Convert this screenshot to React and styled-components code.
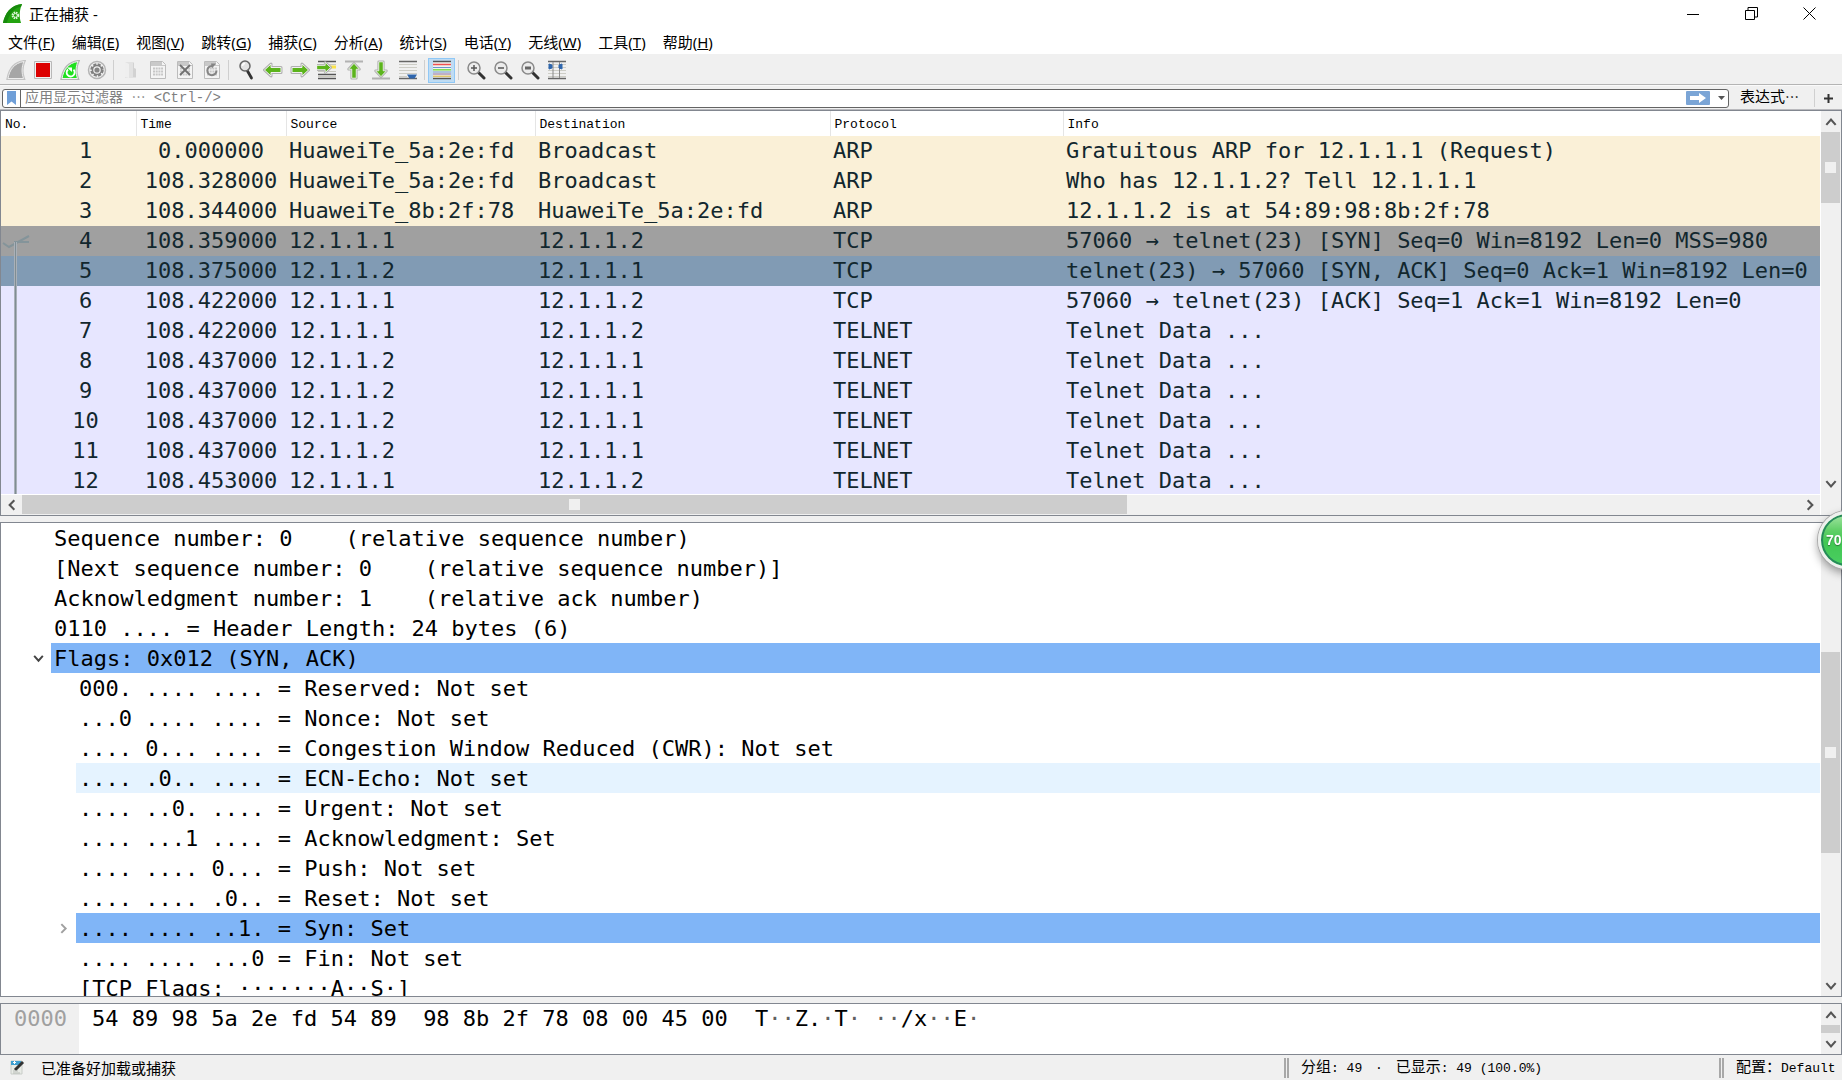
import React from 'react';
import styled, { createGlobalStyle } from 'styled-components';

const GlobalStyle = createGlobalStyle`
  * {
    box-sizing: border-box;
  }

  body {
    margin: 0;
    overflow: hidden;
    background: #f0f0f0;
    color: #000;
  }

  button {
    margin: 0;
    padding: 0;
    border: none;
    background: none;
    color: inherit;
    font: inherit;
  }
`;

const UI_FONT = `'Noto Sans', 'Noto Sans CJK SC', sans-serif`;
const SMALL_FONT = `'Liberation Mono', 'Noto Sans CJK SC', monospace`;
const DATA_FONT = `'DejaVu Sans Mono', 'Noto Sans CJK SC', monospace`;

const Window = styled.div`
  display: flex;
  flex-direction: column;
  height: 100vh;
  overflow: hidden;
  font-family: ${UI_FONT};
  font-size: 15px;
`;

/* ---- title bar and menu ---- */

const TitleBar = styled.header`
  display: flex;
  align-items: center;
  gap: 7px;
  height: 29px;
  padding: 0 4px 2px 3px;
  background: #fff;
`;

const Title = styled.h1`
  flex: 1;
  margin: 0;
  font-size: 15px;
  font-weight: 400;
  line-height: 26px;
`;

const WindowButtons = styled.div`
  display: flex;
`;

const WindowButton = styled.button`
  display: flex;
  align-items: center;
  justify-content: center;
  width: 58px;
  height: 26px;
`;

const MenuBar = styled.nav`
  display: flex;
  height: 27px;
  background: #fff;
  border-bottom: 2px solid #f0f0f0;
`;

const MenuItem = styled.button`
  padding: 0 9px 0 8px;
  font-size: 15px;
  line-height: 24px;
  white-space: nowrap;
`;

/* ---- toolbar ---- */

const ToolBar = styled.div`
  display: flex;
  align-items: center;
  height: 29px;
  padding: 0 2px;
  border-bottom: 1px solid #b4b4b4;
`;

const ToolButton = styled.button`
  display: flex;
  align-items: center;
  justify-content: center;
  width: 27px;
  height: 25px;
  border: 1px solid ${({ $active }) => ($active ? '#90c8f6' : 'transparent')};
  background: ${({ $active }) => ($active ? '#bfdcf3' : 'transparent')};

  svg {
    flex: none;
  }
`;

const ToolSeparator = styled.span`
  width: 7px;
  height: 20px;
  background: linear-gradient(#cfcfcf, #cfcfcf) center / 1px 100% no-repeat;
`;

/* ---- display filter ---- */

const FilterBar = styled.form`
  display: flex;
  align-items: center;
  height: 25px;
  padding: 1px 0 0 2px;
  border-top: 1px solid #fafafa;
  border-bottom: 1px solid #b9b9bd;
`;

const FilterBox = styled.div`
  display: flex;
  flex: 1;
  align-items: center;
  height: 19px;
  border: 1px solid #646464;
  border-radius: 3px;
  background: #fff;
`;

const BookmarkButton = styled.button`
  display: flex;
  align-items: center;
  justify-content: center;
  width: 18px;
  height: 17px;
  border-right: 1px solid #646464;
`;

const FilterInput = styled.input`
  flex: 1;
  min-width: 0;
  height: 17px;
  padding: 0 4px;
  border: none;
  outline: none;
  background: transparent;
  font-family: ${SMALL_FONT};
  font-size: 14px;

  &::placeholder {
    color: #808080;
    opacity: 1;
  }
`;

const ApplyButton = styled.button`
  display: flex;
  align-items: center;
  justify-content: center;
  width: 24px;
  height: 14px;
  border-radius: 1px;
  background: #7ba5d6;
`;

const CaretButton = styled.button`
  display: flex;
  align-items: center;
  justify-content: center;
  width: 18px;
  height: 17px;
  padding-left: 4px;
`;

const ExpressionButton = styled.button`
  width: 86px;
  height: 18px;
  padding-left: 11px;
  border-right: 1px solid #d0d0d0;
  font-family: ${SMALL_FONT};
  font-size: 14px;
  line-height: 18px;
  text-align: left;
  white-space: nowrap;
`;

const AddButton = styled.button`
  display: flex;
  align-items: center;
  justify-content: center;
  width: 27px;
  height: 18px;
`;

/* ---- panes ---- */

const Panes = styled.main`
  display: flex;
  flex: 1;
  flex-direction: column;
  gap: 6px;
  min-height: 0;
`;

const Pane = styled.section`
  display: flex;
  flex: ${({ $share }) => $share} 1 0;
  min-height: 0;
  border: 1px solid #828790;
  background: #fff;
`;

const PaneBody = styled.div`
  position: relative;
  display: flex;
  flex: 1;
  flex-direction: column;
  min-width: 0;
  overflow: hidden;
`;

const Viewport = styled.div`
  flex: 1;
  min-height: 0;
  overflow: hidden;
`;

const PacketTable = styled.table`
  width: 100%;
  table-layout: fixed;
  border-collapse: collapse;
`;

const HeadCell = styled.th`
  height: 25px;
  padding: 2px 4px 0;
  border-right: 1px solid #e5e5e5;
  font-family: ${SMALL_FONT};
  font-size: 13px;
  font-weight: 400;
  line-height: 23px;
  text-align: left;

  &:last-child {
    border-right: none;
  }
`;

const rowColors = {
  arp: '#faf0d7',
  syn: '#a0a0a0',
  selected: '#819bb4',
  tcp: '#e7e6ff',
};

const PacketRow = styled.tr`
  height: 30px;
  background: ${({ $kind }) => rowColors[$kind]};
  color: #12272e;
`;

const Cell = styled.td`
  padding: 0 0 0 3px;
  overflow: hidden;
  font-family: ${DATA_FONT};
  font-size: 22px;
  line-height: 30px;
  white-space: pre;
`;

const NumberCell = styled(Cell)`
  padding-left: 34px;
  text-align: center;
`;

const TimeCell = styled(Cell)`
  padding: 0;
  text-align: center;
`;

const RelatedMark = styled.svg`
  position: absolute;
  top: 115px;
  left: 0;
`;

/* ---- scroll bars ---- */

const VerticalBar = styled.div`
  display: flex;
  flex: none;
  flex-direction: column;
  width: 21px;
  padding-right: 1px;
  border-left: 1px solid #fff;
  background: #f0f0f0;
`;

const HorizontalBar = styled.div`
  display: flex;
  flex: none;
  height: 21px;
  padding-bottom: 1px;
  border-top: 1px solid #fff;
  background: #f0f0f0;
`;

const ScrollButton = styled.button`
  display: flex;
  flex: none;
  align-items: center;
  justify-content: center;
  width: ${({ $wide }) => ($wide ? 21 : 19)}px;
  height: ${({ $wide }) => ($wide ? 19 : 21)}px;
`;

const Track = styled.div`
  display: flex;
  flex: 1;
  flex-direction: ${({ $across }) => ($across ? 'row' : 'column')};
  min-height: 0;
`;

const Space = styled.span`
  flex: ${({ $share }) => $share} 1 0;
`;

const Thumb = styled.div`
  display: flex;
  flex: ${({ $share }) => $share} 1 0;
  align-items: center;
  justify-content: center;
  background: #cdcdcd;
`;

const Grip = styled.span`
  width: 11px;
  height: 11px;
  background: #f0f0f0;
`;

const Corner = styled.span`
  height: 21px;
`;

/* ---- packet details ---- */

const Tree = styled.ul`
  margin: 0;
  padding: 0;
  list-style: none;
`;

const TreeRow = styled.li`
  display: flex;
  height: 30px;
  padding-left: ${({ $level }) => 25 + $level * 25}px;
`;

const Branch = styled.button`
  display: flex;
  align-items: center;
  justify-content: center;
  width: 25px;
  height: 30px;
`;

const treeColors = {
  selected: '#80b5f7',
  hover: '#e5f3ff',
};

const TreeText = styled.span`
  flex: 1;
  overflow: hidden;
  padding-left: 3px;
  background: ${({ $state }) => treeColors[$state] || 'transparent'};
  font-family: ${DATA_FONT};
  font-size: 22px;
  line-height: 32px;
  white-space: pre;
`;

/* ---- bytes ---- */

const HexLine = styled.div`
  display: flex;
  height: 100%;
  font-family: ${DATA_FONT};
  font-size: 22px;
  line-height: 30px;
  white-space: pre;
`;

const HexOffset = styled.span`
  width: 78px;
  padding-left: 13px;
  background: #f0f0f0;
  color: #a0a0a0;
`;

const HexBytes = styled.span`
  width: 676px;
  padding-left: 13px;
`;

const HexText = styled.span``;

const Dim = styled.span`
  color: #606060;
`;

/* ---- status bar ---- */

const StatusBar = styled.footer`
  display: flex;
  align-items: center;
  height: 25px;
  font-family: ${SMALL_FONT};
  font-size: 13px;
`;

const EditComment = styled.button`
  display: flex;
  width: 41px;
  padding-left: 10px;
`;

const StatusText = styled.span`
  flex: 1;
  font-size: 15px;
`;

const StatusField = styled.span`
  width: ${({ $width }) => $width}px;
  height: 20px;
  padding-left: 12px;
  border-left: 5px double #a8a8a8;
  line-height: 22px;
  white-space: pre;
`;

const Han = styled.span`
  font-size: 15px;
`;

const Dot = styled.span`
  padding: 0 5px;
`;

/* ---- floating ball ---- */

const Ball = styled.button`
  position: fixed;
  top: 511px;
  right: -34px;
  width: 58px;
  height: 58px;
  padding-left: 5px;
  border: 3px solid #eef0ee;
  border-radius: 50%;
  background: linear-gradient(#a4e4a4 0%, #5fcf66 32%, #41c753 55%, #4bcf62 100%);
  box-shadow: inset 0 0 0 2px #27895a, 0 0 0 1px #a9a9a9, 0 4px 10px rgba(0, 0, 0, 0.4);
  color: #fff;
  font-family: 'Liberation Sans', sans-serif;
  font-size: 14px;
  font-weight: 700;
  text-align: left;
  text-shadow: 0 1px 1px #277a35;
`;

/* ---- icons ---- */

const Icon = ({ children, size = 20 }) => (
  <svg width={size} height={size} viewBox="0 0 20 20" fill="none" aria-hidden="true">
    {children}
  </svg>
);

const FIN = 'M2 18.500C3.500 10 8 3 18 1.500C15.500 7 15.500 13 17.500 18.500Z';

const AppIcon = () => (
  <Icon size={19}>
    <path d="M0 20C2 10 8 1 20 0C17 7 17 14 19 20Z" fill="#23a310" />
    <path d="M0 20C2 10 8 1 20 0L19 3C10 4 6 13 4 20Z" fill="#178a0c" />
    <circle cx="13" cy="12" r="3" stroke="#dff5da" strokeWidth="2" strokeDasharray="1.600 .8" />
    <circle cx="13" cy="12" r="2" stroke="#dff5da" />
  </Icon>
);

const Fin = () => (
  <Icon>
    <path d={FIN} fill="#a6a6a6" stroke="#c4c4c4" strokeWidth="3" />
    <path d={FIN} fill="#a6a6a6" stroke="#ececec" />
  </Icon>
);

const Stop = () => (
  <Icon>
    <path d="M1.500 1.500h17v17h-17z" fill="#f0f0f0" stroke="#b8b8b8" />
    <path d="M3 3h14v14H3z" fill="#dc0000" />
  </Icon>
);

const Restart = () => (
  <Icon>
    <path d={FIN} fill="#1fe01f" stroke="#b5b5b5" strokeWidth="3" />
    <path d={FIN} fill="#1fe01f" stroke="#f2f2f2" />
    <path d="M8 9.500a4 4 0 1 0 5.500.2" stroke="#fff" strokeWidth="1.800" />
    <path d="M7 7.500h5v4.500z" fill="#fff" />
  </Icon>
);

const Options = () => (
  <Icon>
    <circle cx="10" cy="10" r="8.500" fill="#f2f2f2" stroke="#b4b4b4" strokeWidth="1.500" />
    <circle cx="10" cy="10" r="5.500" stroke="#808080" strokeWidth="2.500" strokeDasharray="3 1.320" />
    <circle cx="10" cy="10" r="4.500" stroke="#808080" strokeWidth="1.500" />
    <circle cx="10" cy="10" r="2.600" fill="#858585" />
  </Icon>
);

const Open = () => (
  <Icon>
    <path d="M4 2h9v6l2 1v9H4z" fill="#e2e2e2" />
    <path d="M4 2l4 2v14l-4-1z" fill="#efefef" />
    <path d="M12 3v14h3V9l-2-1V3z" fill="#d2d2d2" />
  </Icon>
);

const Sheet = ({ children }) => (
  <Icon>
    <path d="M2.500 1.500h12l3 3v14h-15z" fill="#f4f4f4" stroke="#bcbcbc" />
    <path d="M3 2h11v3h3v1H3z" fill="#c9c9c9" />
    <path d="M5 8.500h10M5 11.500h10M5 14.500h10" stroke="#c6c6c6" strokeWidth="2" strokeDasharray="2 .7" />
    {children}
  </Icon>
);

const Save = () => <Sheet />;

const CloseFile = () => (
  <Sheet>
    <path d="M5 5l10 10M15 5L5 15" stroke="#707070" strokeWidth="1.800" />
  </Sheet>
);

const Reload = () => (
  <Sheet>
    <path d="M14.500 10.500A4.600 4.600 0 1 1 10 6" stroke="#858585" strokeWidth="2" />
    <path d="M9 3.500h5L10 8.500z" fill="#858585" />
  </Sheet>
);

const Lens = ({ children }) => (
  <Icon>
    <path d="M12.500 12.500l5.500 5.500" stroke="#333" strokeWidth="3" strokeLinecap="round" />
    <circle cx="8" cy="8" r="6" fill="#ececec" stroke="#8a8a8a" strokeWidth="1.500" />
    {children}
  </Icon>
);

const Find = () => (
  <Icon>
    <path d="M11.500 11l4 7" stroke="#333" strokeWidth="2.800" strokeLinecap="round" />
    <circle cx="9" cy="6" r="5" fill="#e4e4e4" stroke="#666" strokeWidth="1.500" />
    <path d="M6.500 6A2.500 2.500 0 0 1 9 3.500" stroke="#fff" strokeWidth="1.500" />
  </Icon>
);

const ARROW = 'M1.500 10L8 4v3.500h10v5H8V16z';

const GreenArrow = ({ transform }) => (
  <g transform={transform}>
    <path d={ARROW} stroke="#b0b0b0" strokeWidth="3" strokeLinejoin="round" />
    <path d={ARROW} fill="#5cb41c" stroke="#f0f0f0" strokeWidth="1" />
  </g>
);

const Back = () => (
  <Icon>
    <GreenArrow />
  </Icon>
);

const Forward = () => (
  <Icon>
    <GreenArrow transform="rotate(180 10 10)" />
  </Icon>
);

const Jump = () => (
  <Icon>
    <path d="M1 1.500h18M1 14.500h18M1 18.500h18" stroke="#555" strokeWidth="1.500" />
    <path d="M1 4.500h18M1 11.500h18M1 16.500h18" stroke="#c9c9c0" />
    <path d="M12 7h7" stroke="#fbe34a" strokeWidth="3" />
    <GreenArrow transform="translate(-1 -2) rotate(180 8 9) scale(.85)" />
  </Icon>
);

const First = () => (
  <Icon>
    <path d="M1 1.500h18" stroke="#b2b2b2" strokeWidth="2" />
    <GreenArrow transform="translate(1 2) rotate(90 9 9) scale(.9)" />
  </Icon>
);

const Last = () => (
  <Icon>
    <path d="M1 18.500h18" stroke="#b2b2b2" strokeWidth="2" />
    <GreenArrow transform="translate(1 0) rotate(-90 9 9) scale(.9)" />
  </Icon>
);

const AutoScroll = () => (
  <Icon>
    <path d="M1 1.500h18M1 18.500h18" stroke="#666" strokeWidth="1.500" />
    <path d="M1 4.500h18M1 7.500h18M1 10.500h18M1 13.500h18M1 16.500h8" stroke="#cdcdc6" />
    <path d="M9 14.500h10l-2.500 4h-5z" fill="#2f66ad" />
  </Icon>
);

const Colorize = () => (
  <Icon>
    <path d="M1 1h18v18H1z" fill="#f3f3ee" />
    <path d="M1 1.500h18M1 18.500h18" stroke="#555" strokeWidth="1.500" />
    <path d="M1 4.500h18" stroke="#f05050" strokeWidth="1.500" />
    <path d="M1 7.500h18M1 12h18" stroke="#6a94cc" strokeWidth="1.200" />
    <path d="M1 9.800h18" stroke="#7ddc4c" strokeWidth="1.500" />
    <path d="M1 14h18" stroke="#8c6c9c" />
    <path d="M1 16.200h18" stroke="#d8b230" />
  </Icon>
);

const ZoomIn = () => (
  <Lens>
    <path d="M5 8h6M8 5v6" stroke="#555" strokeWidth="1.500" />
  </Lens>
);

const ZoomOut = () => (
  <Lens>
    <path d="M5 8h6" stroke="#555" strokeWidth="1.500" />
  </Lens>
);

const ZoomReset = () => (
  <Lens>
    <path d="M5 8h6" stroke="#666" strokeWidth="3" />
  </Lens>
);

const ResizeColumns = () => (
  <Icon>
    <path d="M1 4.500h18M1 7.500h18M1 10.500h18M1 13.500h18M1 16.500h18" stroke="#cdcdc6" />
    <path d="M1 1.500h18M1 18.500h18" stroke="#666" strokeWidth="1.500" />
    <path d="M6 2v16M12.500 2v16" stroke="#8a8a8a" />
    <path d="M2 4v5l3-1V5zM15 4v5l-3-1V5z" fill="#2f66ad" stroke="#2f66ad" />
  </Icon>
);

const CHEVRONS = {
  up: 'M2 8.500L6 4l4 4.500',
  down: 'M2 3.500L6 8l4-4.500',
  left: 'M8 2L4 6l4 4',
  right: 'M4 2l4 4-4 4',
};

const Chevron = ({ to, color = '#555', size = 14 }) => (
  <svg width={size} height={size} viewBox="0 0 12 12" fill="none" aria-hidden="true">
    <path d={CHEVRONS[to]} stroke={color} strokeWidth="1.800" />
  </svg>
);

const tools = [
  ['开始捕获', Fin],
  ['停止捕获', Stop],
  ['重新开始', Restart],
  ['捕获选项', Options],
  null,
  ['打开', Open],
  ['保存', Save],
  ['关闭', CloseFile],
  ['重新加载', Reload],
  null,
  ['查找', Find],
  ['后退', Back],
  ['前进', Forward],
  ['转到分组', Jump],
  ['首个分组', First],
  ['最新分组', Last],
  ['自动滚动', AutoScroll],
  null,
  ['着色', Colorize, true],
  null,
  ['放大', ZoomIn],
  ['缩小', ZoomOut],
  ['原始大小', ZoomReset],
  ['调整列宽', ResizeColumns],
];

const menus = [
  ['文件', 'F'],
  ['编辑', 'E'],
  ['视图', 'V'],
  ['跳转', 'G'],
  ['捕获', 'C'],
  ['分析', 'A'],
  ['统计', 'S'],
  ['电话', 'Y'],
  ['无线', 'W'],
  ['工具', 'T'],
  ['帮助', 'H'],
];

const A = '12.1.1.1';
const B = '12.1.1.2';
const DATA = 'Telnet Data ...';

const packets = [
  ['arp', '0.000000', 'HuaweiTe_5a:2e:fd', 'Broadcast', 'ARP', 'Gratuitous ARP for 12.1.1.1 (Request)'],
  ['arp', '108.328000', 'HuaweiTe_5a:2e:fd', 'Broadcast', 'ARP', 'Who has 12.1.1.2? Tell 12.1.1.1'],
  ['arp', '108.344000', 'HuaweiTe_8b:2f:78', 'HuaweiTe_5a:2e:fd', 'ARP', '12.1.1.2 is at 54:89:98:8b:2f:78'],
  ['syn', '108.359000', A, B, 'TCP', '57060 → telnet(23) [SYN] Seq=0 Win=8192 Len=0 MSS=980'],
  ['selected', '108.375000', B, A, 'TCP', 'telnet(23) → 57060 [SYN, ACK] Seq=0 Ack=1 Win=8192 Len=0 MSS=980'],
  ['tcp', '108.422000', A, B, 'TCP', '57060 → telnet(23) [ACK] Seq=1 Ack=1 Win=8192 Len=0'],
  ['tcp', '108.422000', A, B, 'TELNET', DATA],
  ['tcp', '108.437000', B, A, 'TELNET', DATA],
  ['tcp', '108.437000', B, A, 'TELNET', DATA],
  ['tcp', '108.437000', B, A, 'TELNET', DATA],
  ['tcp', '108.437000', B, A, 'TELNET', DATA],
  ['tcp', '108.453000', A, B, 'TELNET', DATA],
];

const details = [
  { level: 0, text: 'Sequence number: 0    (relative sequence number)' },
  { level: 0, text: '[Next sequence number: 0    (relative sequence number)]' },
  { level: 0, text: 'Acknowledgment number: 1    (relative ack number)' },
  { level: 0, text: '0110 .... = Header Length: 24 bytes (6)' },
  { level: 0, text: 'Flags: 0x012 (SYN, ACK)', state: 'selected', branch: 'down' },
  { level: 1, text: '000. .... .... = Reserved: Not set' },
  { level: 1, text: '...0 .... .... = Nonce: Not set' },
  { level: 1, text: '.... 0... .... = Congestion Window Reduced (CWR): Not set' },
  { level: 1, text: '.... .0.. .... = ECN-Echo: Not set', state: 'hover' },
  { level: 1, text: '.... ..0. .... = Urgent: Not set' },
  { level: 1, text: '.... ...1 .... = Acknowledgment: Set' },
  { level: 1, text: '.... .... 0... = Push: Not set' },
  { level: 1, text: '.... .... .0.. = Reset: Not set' },
  { level: 1, text: '.... .... ..1. = Syn: Set', state: 'selected', branch: 'right' },
  { level: 1, text: '.... .... ...0 = Fin: Not set' },
  { level: 1, text: '[TCP Flags: ·······A··S·]' },
];

const ScrollBar = ({ before, thumb, after, grip, corner }) => (
  <VerticalBar>
    <ScrollButton aria-label="向上滚动">
      <Chevron to="up" />
    </ScrollButton>
    <Track>
      <Space $share={before} />
      <Thumb $share={thumb}>{grip && <Grip />}</Thumb>
      <Space $share={after} />
    </Track>
    <ScrollButton aria-label="向下滚动">
      <Chevron to="down" />
    </ScrollButton>
    {corner && <Corner />}
  </VerticalBar>
);

const Header = () => (
  <>
    <TitleBar>
      <AppIcon />
      <Title>正在捕获 -</Title>
      <WindowButtons>
        <WindowButton aria-label="最小化">
          <svg width="12" height="12" stroke="#000">
            <path d="M0 6.500h12" />
          </svg>
        </WindowButton>
        <WindowButton aria-label="还原">
          <svg width="13" height="13" fill="none" stroke="#000">
            <path d="M.5 3.500h9v9h-9zM3 3V.5h9.500v9.500H10" />
          </svg>
        </WindowButton>
        <WindowButton aria-label="关闭窗口">
          <svg width="13" height="13" stroke="#000">
            <path d="M.5.5l12 12M12.500.5l-12 12" />
          </svg>
        </WindowButton>
      </WindowButtons>
    </TitleBar>
    <MenuBar>
      {menus.map(([label, key]) => (
        <MenuItem key={key}>
          {label}(<u>{key}</u>)
        </MenuItem>
      ))}
    </MenuBar>
    <ToolBar>
      {tools.map((tool, i) => {
        if (!tool) return <ToolSeparator key={i} />;
        const [label, Glyph, active] = tool;
        return (
          <ToolButton key={label} aria-label={label} $active={active}>
            <Glyph />
          </ToolButton>
        );
      })}
    </ToolBar>
  </>
);

const Filter = () => (
  <FilterBar onSubmit={(e) => e.preventDefault()}>
    <FilterBox>
      <BookmarkButton type="button" aria-label="书签">
        <svg width="9" height="14">
          <path d="M0 0h9v14l-4.500-3.500L0 14z" fill="#6f9fd8" />
        </svg>
      </BookmarkButton>
      <FilterInput aria-label="显示过滤器" placeholder="应用显示过滤器 ⋯ <Ctrl-/>" />
      <ApplyButton aria-label="应用">
        <svg width="18" height="10">
          <path d="M1 3h9V0l7 5-7 5V7H1z" fill="#fff" />
        </svg>
      </ApplyButton>
      <CaretButton type="button" aria-label="历史">
        <svg width="7" height="4">
          <path d="M0 0h7L3.500 4z" fill="#555" />
        </svg>
      </CaretButton>
    </FilterBox>
    <ExpressionButton type="button">
      <Han>表达式</Han>⋯
    </ExpressionButton>
    <AddButton type="button" aria-label="添加">
      <svg width="9" height="9" stroke="#333" strokeWidth="2">
        <path d="M0 4.500h9M4.500 0v9" />
      </svg>
    </AddButton>
  </FilterBar>
);

const PacketList = () => (
  <Pane $share={404}>
    <PaneBody>
      <Viewport>
        <PacketTable>
          <colgroup>
            <col width="135" />
            <col width="150" />
            <col width="249" />
            <col width="295" />
            <col width="233" />
            <col />
          </colgroup>
          <thead>
            <tr>
              {['No.', 'Time', 'Source', 'Destination', 'Protocol', 'Info'].map((name) => (
                <HeadCell key={name}>{name}</HeadCell>
              ))}
            </tr>
          </thead>
          <tbody>
            {packets.map(([kind, time, source, destination, protocol, info], i) => (
              <PacketRow key={i} $kind={kind}>
                <NumberCell>{i + 1}</NumberCell>
                <TimeCell>{time}</TimeCell>
                <Cell>{source}</Cell>
                <Cell>{destination}</Cell>
                <Cell>{protocol}</Cell>
                <Cell>{info}</Cell>
              </PacketRow>
            ))}
          </tbody>
        </PacketTable>
      </Viewport>
      <RelatedMark width="32" height="268" fill="none" aria-hidden="true">
        <path d="M2 17l6 4 20-11M13 16h15" stroke="#84949a" strokeWidth="2" />
        <path d="M14.500 16v252" stroke="#a9b0b8" strokeWidth="3" />
        <path d="M14.500 16v252" stroke="#7f8d93" />
      </RelatedMark>
      <HorizontalBar>
        <ScrollButton $wide aria-label="向左滚动">
          <Chevron to="left" />
        </ScrollButton>
        <Track $across>
          <Thumb $share={1105}>
            <Grip />
          </Thumb>
          <Space $share={672} />
        </Track>
        <ScrollButton $wide aria-label="向右滚动">
          <Chevron to="right" />
        </ScrollButton>
      </HorizontalBar>
    </PaneBody>
    <ScrollBar before={0} thumb={71} after={270} grip corner />
  </Pane>
);

const PacketDetails = () => (
  <Pane $share={473}>
    <PaneBody>
      <Viewport>
        <Tree>
          {details.map(({ level, text, state, branch }) => (
            <TreeRow key={text} $level={level}>
              <Branch as={branch ? 'button' : 'span'} aria-label={branch && '展开或折叠'}>
                {branch && <Chevron to={branch} size={13} color={branch === 'right' ? '#a0a0a0' : '#444'} />}
              </Branch>
              <TreeText $state={state}>{text}</TreeText>
            </TreeRow>
          ))}
        </Tree>
      </Viewport>
    </PaneBody>
    <ScrollBar before={108} thumb={201} after={122} grip />
  </Pane>
);

const PacketBytes = () => (
  <Pane $share={50}>
    <PaneBody>
      <HexLine>
        <HexOffset>0000</HexOffset>
        <HexBytes>54 89 98 5a 2e fd 54 89  98 8b 2f 78 08 00 45 00</HexBytes>
        <HexText>
          T<Dim>··</Dim>Z.<Dim>·</Dim>T<Dim>· ··</Dim>/x<Dim>··</Dim>E<Dim>·</Dim>
        </HexText>
      </HexLine>
    </PaneBody>
    <ScrollBar before={0} thumb={8} after={0} />
  </Pane>
);

const Status = () => (
  <StatusBar>
    <EditComment aria-label="编辑注释">
      <svg width="15" height="15" fill="none">
        <path d="M1 1h11v13H1z" fill="#e8ebe6" stroke="#c8ccc8" />
        <path d="M1 1h10v4H1z" fill="#3f9fd0" />
        <path d="M3 2.500h3M4.500 1v3" stroke="#fff" />
        <path d="M5 10l8-8" stroke="#333" strokeWidth="3" />
        <path d="M3 11h5M3 13h7" stroke="#b8bcb8" />
      </svg>
    </EditComment>
    <StatusText>已准备好加载或捕获</StatusText>
    <StatusField $width={435}>
      <Han>分组</Han>: 49 <Dot>·</Dot> <Han>已显示</Han>: 49 (100.0%)
    </StatusField>
    <StatusField $width={123}>
      <Han>配置：</Han>Default
    </StatusField>
  </StatusBar>
);

const App = () => {
  return (
    <Window>
      <GlobalStyle />
      <Header />
      <Filter />
      <Panes>
        <PacketList />
        <PacketDetails />
        <PacketBytes />
      </Panes>
      <Status />
      <Ball aria-label="内存占用">70</Ball>
    </Window>
  );
};

export default App;
